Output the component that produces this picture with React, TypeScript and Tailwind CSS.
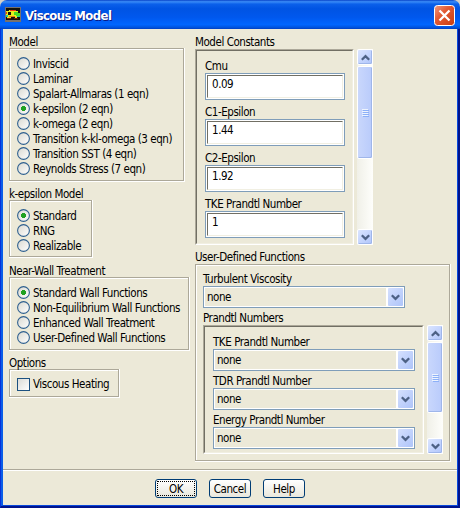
import React, { useState } from "react";
import clsx from "clsx";

const MODELS = [
  "Inviscid",
  "Laminar",
  "Spalart-Allmaras (1 eqn)",
  "k-epsilon (2 eqn)",
  "k-omega (2 eqn)",
  "Transition k-kl-omega (3 eqn)",
  "Transition SST (4 eqn)",
  "Reynolds Stress (7 eqn)",
];

const WALL_TREATMENTS = [
  "Standard Wall Functions",
  "Non-Equilibrium Wall Functions",
  "Enhanced Wall Treatment",
  "User-Defined Wall Functions",
];

const CONSTANTS = [
  { label: "Cmu", value: "0.09" },
  { label: "C1-Epsilon", value: "1.44" },
  { label: "C2-Epsilon", value: "1.92" },
  { label: "TKE Prandtl Number", value: "1" },
];

const Label = ({ children, className }: { children: React.ReactNode; className?: string }) => (
  <div className={clsx("h-[14px] leading-[14px] tracking-[-0.45px] whitespace-nowrap", className)}>{children}</div>
);

// Etched frame: gray line with a white line right below it
const Etched = ({ children, className }: { children: React.ReactNode; className?: string }) => (
  <div className={clsx("border border-white", className)}>
    <div className="-mt-px -ml-px h-[calc(100%+1px)] w-[calc(100%+1px)] border border-[#aca899] shadow-[inset_1px_1px_0_#fff]">
      {children}
    </div>
  </div>
);

const Sunken = ({ children, className }: { children: React.ReactNode; className?: string }) => (
  <div className={clsx("border border-t-[#aca899] border-r-white border-b-white border-l-[#aca899]", className)}>
    <div className="h-full border border-t-[#716f64] border-r-[#f1efe2] border-b-[#f1efe2] border-l-[#716f64]">
      {children}
    </div>
  </div>
);

const RadioList = ({ items, initial }: { items: string[]; initial: number }) => {
  const [selected, setSelected] = useState(initial);

  return (
    <div className="pt-[7px] pl-[7px]">
      {items.map((item, i) => (
        <div key={item} className="flex h-[15px] items-center gap-[3px]" onClick={() => setSelected(i)}>
          <svg width="13" height="13" viewBox="0 0 13 13" className="shrink-0">
            <circle cx="6.5" cy="6.5" r="5.9" fill="url(#face)" stroke="#2f608f" strokeWidth="1.1" />
            {i === selected && <path d="M5 4h3v1h1v3H8v1H5V8H4V5h1z" fill="#21a121" />}
          </svg>
          <Label>{item}</Label>
        </div>
      ))}
    </div>
  );
};

const Chevron = ({ up }: { up?: boolean }) => (
  <svg width="9" height="7" viewBox="0 0 9 7" className={clsx(up && "rotate-180")}>
    <path d="M.8 1.2l3.7 3.7 3.7-3.7" fill="none" stroke="#4d6185" strokeWidth="2.3" />
  </svg>
);

const ScrollButton = ({ up }: { up?: boolean }) => (
  <div className="flex h-4 w-4 shrink-0 items-center justify-center rounded-[2px] border border-white bg-linear-to-br from-[#dbe5ff] to-[#b0c5fb] shadow-[inset_-1px_-1px_0_#9fb6ea]">
    <Chevron up={up} />
  </div>
);

const ScrollBar = ({ className, thumb }: { className: string; thumb: string }) => (
  <div className={clsx("flex w-4 flex-col bg-linear-to-r from-[#f0f0e8] to-[#fefefb]", className)}>
    <ScrollButton up />
    <div
      className={clsx(
        "mt-px flex flex-col items-center justify-center gap-px rounded-[2px] border border-white bg-linear-to-r from-[#c9d7fc] to-[#b9cbfb] shadow-[inset_-1px_-1px_0_#9fb6ea]",
        thumb
      )}
    >
      {[0, 1, 2, 3].map((n) => (
        <div key={n} className="h-px w-[6px] bg-[#eef4fe] shadow-[1px_1px_0_#8cb0f8]" />
      ))}
    </div>
    <div className="grow" />
    <ScrollButton />
  </div>
);

const Combo = () => (
  <div className="flex h-[22px] w-[202px] border border-[#7f9db9] bg-white p-px">
    <div className="flex grow items-center bg-[#ece9d8] pl-[2px]">
      <Label>none</Label>
    </div>
    <div className="ml-[2px] flex w-[15px] items-center justify-center rounded-[1px] bg-linear-to-br from-[#d5e0fe] to-[#aec4f9]">
      <Chevron />
    </div>
  </div>
);

const Button = ({ children, focused }: { children: string; focused?: boolean }) => (
  <button className="h-[19px] w-[42px] rounded-[3px] border border-[#003c74] bg-linear-to-b from-white to-[#e9e7dc] p-px">
    <span
      className={clsx(
        "flex h-full items-center justify-center border border-dotted",
        focused ? "border-black" : "border-transparent"
      )}
    >
      <Label>{children}</Label>
    </span>
  </button>
);

const Logo = () => (
  <svg width="16" height="15" viewBox="0 0 16 15" className="shrink-0" shapeRendering="crispEdges">
    <path d="M0 0h16v15H0z" fill="#77716e" />
    <path d="M1 1h14v12H1z" fill="#14120c" />
    <path d="M1 4h3V3h7v1h2v2h2v4h-3v1h-2v-1H6v1H2v-1H1z" fill="#e6ee1c" />
    <path d="M5 3h6v1H5zM1 5h1v2H1z" fill="#f03a10" />
    <path d="M3 5h3v3H3z" fill="#10100c" />
    <path d="M9 5h4v1h2v3h-4V8H9z" fill="#46dc28" />
    <path d="M1 8h2v2H1zM12 9h3v1h-3z" fill="#20c8a0" />
    <path d="M4 9h6v1H4z" fill="#e87a10" />
    <path d="M2 11h4v1H2zM9 11h4v1H9z" fill="#7a1808" />
  </svg>
);

const App = () => {
  const [heating, setHeating] = useState(false);

  return (
    <div className="flex h-[508px] w-[460px] flex-col overflow-hidden bg-[#d4d0c8] font-['DejaVu_Sans_Condensed','DejaVu_Sans',sans-serif] text-[11.5px] text-black [font-stretch:condensed]">
      <svg width="0" height="0" className="absolute">
        <linearGradient id="face" x1="0" y1="0" x2="1" y2="1">
          <stop offset="0" stopColor="#d9d8d0" />
          <stop offset="1" stopColor="#fff" />
        </linearGradient>
      </svg>

      <div className="flex h-[29px] shrink-0 items-center rounded-t-[7px] bg-[linear-gradient(#0843c8_0,#3a8cf8_6%,#0b60ea_14%,#0054e3_30%,#0058ee_60%,#0066ff_85%,#0050d8_96%,#003dc0_100%)] pr-[5px] pl-[5px]">
        <Logo />
        <span className="ml-1 grow pt-[3px] text-[13px] leading-[18px] font-bold tracking-[-0.6px] text-white [text-shadow:1px_1px_0_#0a1883]">
          Viscous Model
        </span>
        <svg width="21" height="21" viewBox="0 0 21 21" className="mt-[2px]">
          <rect x=".5" y=".5" width="20" height="20" rx="3" fill="url(#close)" stroke="#fff" />
          <linearGradient id="close" x1="0" y1="0" x2="1" y2="1">
            <stop offset="0" stopColor="#f09a80" />
            <stop offset=".4" stopColor="#e25a34" />
            <stop offset="1" stopColor="#c83c10" />
          </linearGradient>
          <path d="M5.5 5.5l10 10M15.5 5.5l-10 10" stroke="#fff" strokeWidth="2.3" />
        </svg>
      </div>

      <div className="flex grow flex-col border-r-2 border-b-2 border-l border-r-[#00138c] border-b-[#00138c] border-l-[#0831d9]">
        <div className="flex grow flex-col border-r border-b border-l-2 border-r-[#0848dd] border-b-[#0848dd] border-l-[#0a5de8] bg-[#ece9d8]">
          <div className="flex h-[440px] shrink-0 pt-[6px] pl-[6px]">
            <div className="w-[186px] shrink-0">
              <Label>Model</Label>
              <Etched className="-mt-px h-[134px] w-[176px]">
                <RadioList items={MODELS} initial={3} />
              </Etched>

              <Label className="mt-[5px]">k-epsilon Model</Label>
              <Etched className="-mt-px h-[58px] w-[84px]">
                <RadioList items={["Standard", "RNG", "Realizable"]} initial={0} />
              </Etched>

              <Label className="mt-[6px]">Near-Wall Treatment</Label>
              <Etched className="-mt-px h-[74px] w-[181px]">
                <RadioList items={WALL_TREATMENTS} initial={0} />
              </Etched>

              <Label className="mt-[5px]">Options</Label>
              <Etched className="-mt-px h-[29px] w-[111px]">
                <div className="flex items-center gap-[3px] pt-[7px] pl-[7px]" onClick={() => setHeating(!heating)}>
                  <div className="h-[13px] w-[13px] border border-[#1c5180] bg-linear-to-br from-[#dcdcd7] to-white text-center leading-[11px] text-[#21a121]">
                    {heating && "✓"}
                  </div>
                  <Label>Viscous Heating</Label>
                </div>
              </Etched>
            </div>

            <div>
              <Label>Model Constants</Label>
              <div className="flex gap-[3px]">
                <Sunken className="h-[196px] w-[159px]">
                  <div className="pt-[8px] pl-[8px]">
                    {CONSTANTS.map(({ label, value }) => (
                      <div key={label} className="h-[46px]">
                        <Label>{label}</Label>
                        <div className="h-[27px] w-[140px] border border-[#7f9db9] bg-white p-px">
                          <div className="h-full border border-t-[#716f64] border-r-[#f1efe2] border-b-[#f1efe2] border-l-[#716f64] pt-px pl-1">
                            <Label>{value}</Label>
                          </div>
                        </div>
                      </div>
                    ))}
                  </div>
                </Sunken>
                <ScrollBar className="h-[196px]" thumb="h-[93px]" />
              </div>

              <Label className="mt-[5px]">User-Defined Functions</Label>
              <Etched className="h-[198px] w-[256px]">
                <div className="pt-[7px] pl-[7px]">
                  <Label>Turbulent Viscosity</Label>
                  <Combo />
                  <Label className="mt-[3px]">Prandtl Numbers</Label>
                  <div className="flex gap-[3px]">
                    <Sunken className="h-[129px] w-[221px]">
                      <div className="pt-[8px] pl-[8px]">
                        {["TKE", "TDR", "Energy"].map((name) => (
                          <div key={name} className="h-[39px]">
                            <Label>{name} Prandtl Number</Label>
                            <Combo />
                          </div>
                        ))}
                      </div>
                    </Sunken>
                    <ScrollBar className="h-[129px]" thumb="h-[71px]" />
                  </div>
                </div>
              </Etched>
            </div>
          </div>

          <div className="flex grow justify-center gap-3 border-t border-[#aca899] pt-[9px] shadow-[inset_0_1px_0_#fff]">
            <Button focused>OK</Button>
            <Button>Cancel</Button>
            <Button>Help</Button>
          </div>
        </div>
      </div>
    </div>
  );
};

export default App;
